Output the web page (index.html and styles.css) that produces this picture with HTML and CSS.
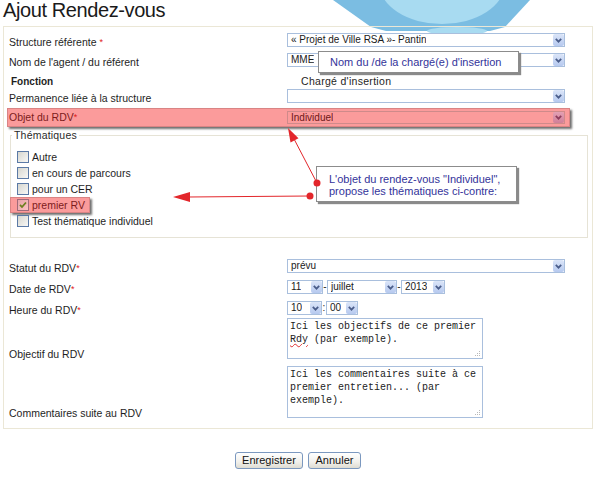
FILE: index.html
```html
<!DOCTYPE html>
<html lang="fr">
<head>
<meta charset="utf-8">
<title>Ajout Rendez-vous</title>
<link rel="stylesheet" href="styles.css">
</head>
<body>
<svg class="bg-logo" width="605" height="40" viewBox="0 0 605 40" aria-hidden="true">
  <polygon points="333,0 530,0 505,27 490,31 386,31 371,27" fill="#7bbde2"/>
  <ellipse cx="442" cy="-17" rx="63" ry="41" fill="#a8dbf1"/>
  <ellipse cx="457" cy="31" rx="30" ry="4" fill="#a8dbf1"/>
</svg>

<h1 class="title">Ajout Rendez-vous</h1>

<form class="box">
  <div class="row r20">
    <label class="lbl">Structure référente <span class="req">*</span></label>
    <div class="sel w-full"><span class="val">« Projet de Ville RSA »- Pantin</span><span class="arr"><svg width="7" height="5" viewBox="0 0 7 5"><path d="M0.8 0.8 L3.5 3.7 L6.2 0.8" fill="none" stroke="currentColor" stroke-width="1.7"/></svg></span></div>
  </div>
  <div class="row r20">
    <label class="lbl">Nom de l'agent / du référent</label>
    <div class="sel w-full"><span class="val">MME</span><span class="arr"><svg width="7" height="5" viewBox="0 0 7 5"><path d="M0.8 0.8 L3.5 3.7 L6.2 0.8" fill="none" stroke="currentColor" stroke-width="1.7"/></svg></span></div>
  </div>
  <div class="row r16">
    <span class="fn">Fonction</span>
    <span class="fn-val">Chargé d'insertion</span>
  </div>
  <div class="row r19">
    <label class="lbl">Permanence liée à la structure</label>
    <div class="sel w-full"><span class="val"></span><span class="arr"><svg width="7" height="5" viewBox="0 0 7 5"><path d="M0.8 0.8 L3.5 3.7 L6.2 0.8" fill="none" stroke="currentColor" stroke-width="1.7"/></svg></span></div>
  </div>
  <div class="row hl">
    <label class="lbl">Objet du RDV<span class="req">*</span></label>
    <div class="sel pink w-full"><span class="val">Individuel</span><span class="arr"><svg width="7" height="5" viewBox="0 0 7 5"><path d="M0.8 0.8 L3.5 3.7 L6.2 0.8" fill="none" stroke="currentColor" stroke-width="1.7"/></svg></span></div>
  </div>

  <fieldset class="themes">
    <legend>Thématiques</legend>
    <div class="cb-row"><span class="cb"></span>Autre</div>
    <div class="cb-row"><span class="cb"></span>en cours de parcours</div>
    <div class="cb-row"><span class="cb"></span>pour un CER</div>
    <div class="cb-row hl2"><span class="cb checked"><svg width="10" height="10" viewBox="0 0 10 10"><path d="M2 4.8 L4 7 L8 2.5" fill="none" stroke="#6d7f1d" stroke-width="1.8"/></svg></span>premier RV</div>
    <div class="cb-row"><span class="cb"></span>Test thématique individuel</div>
  </fieldset>

  <div class="row r21">
    <label class="lbl">Statut du RDV<span class="req">*</span></label>
    <div class="sel w-full"><span class="val">prévu</span><span class="arr"><svg width="7" height="5" viewBox="0 0 7 5"><path d="M0.8 0.8 L3.5 3.7 L6.2 0.8" fill="none" stroke="currentColor" stroke-width="1.7"/></svg></span></div>
  </div>
  <div class="row r21">
    <label class="lbl">Date de RDV<span class="req">*</span></label>
    <div class="inline">
      <div class="sel w36"><span class="val">11</span><span class="arr"><svg width="7" height="5" viewBox="0 0 7 5"><path d="M0.8 0.8 L3.5 3.7 L6.2 0.8" fill="none" stroke="currentColor" stroke-width="1.7"/></svg></span></div>
      <span class="sep">-</span>
      <div class="sel w70"><span class="val">juillet</span><span class="arr"><svg width="7" height="5" viewBox="0 0 7 5"><path d="M0.8 0.8 L3.5 3.7 L6.2 0.8" fill="none" stroke="currentColor" stroke-width="1.7"/></svg></span></div>
      <span class="sep">-</span>
      <div class="sel w44"><span class="val">2013</span><span class="arr"><svg width="7" height="5" viewBox="0 0 7 5"><path d="M0.8 0.8 L3.5 3.7 L6.2 0.8" fill="none" stroke="currentColor" stroke-width="1.7"/></svg></span></div>
    </div>
  </div>
  <div class="row r17">
    <label class="lbl">Heure du RDV<span class="req">*</span></label>
    <div class="inline">
      <div class="sel w35"><span class="val">10</span><span class="arr"><svg width="7" height="5" viewBox="0 0 7 5"><path d="M0.8 0.8 L3.5 3.7 L6.2 0.8" fill="none" stroke="currentColor" stroke-width="1.7"/></svg></span></div>
      <span class="sep">:</span>
      <div class="sel w32"><span class="val">00</span><span class="arr"><svg width="7" height="5" viewBox="0 0 7 5"><path d="M0.8 0.8 L3.5 3.7 L6.2 0.8" fill="none" stroke="currentColor" stroke-width="1.7"/></svg></span></div>
    </div>
  </div>
  <div class="row tarow">
    <label class="lbl lbl-end">Objectif du RDV</label>
    <div class="ta ta1">Ici les objectifs de ce premier<br><span class="spell">Rdy</span> (par exemple).<svg class="grip" width="7" height="7" viewBox="0 0 7 7"><g fill="#b9b9b9"><rect x="5" y="1" width="1" height="1"/><rect x="3" y="3" width="1" height="1"/><rect x="5" y="3" width="1" height="1"/><rect x="1" y="5" width="1" height="1"/><rect x="3" y="5" width="1" height="1"/><rect x="5" y="5" width="1" height="1"/></g></svg></div>
  </div>
  <div class="row tarow last">
    <label class="lbl lbl-end">Commentaires suite au RDV</label>
    <div class="ta ta2">Ici les commentaires suite à ce<br>premier entretien... (par<br>exemple).<svg class="grip" width="7" height="7" viewBox="0 0 7 7"><g fill="#b9b9b9"><rect x="5" y="1" width="1" height="1"/><rect x="3" y="3" width="1" height="1"/><rect x="5" y="3" width="1" height="1"/><rect x="1" y="5" width="1" height="1"/><rect x="3" y="5" width="1" height="1"/><rect x="5" y="5" width="1" height="1"/></g></svg></div>
  </div>
</form>

<div class="actions">
  <button type="button" class="btn btn-save">Enregistrer</button>
  <button type="button" class="btn btn-cancel">Annuler</button>
</div>

<div class="callout c1">Nom du /de la chargé(e) d'insertion</div>
<div class="callout c2">L'objet du rendez-vous "Individuel",<br>propose les thématiques ci-contre:</div>

<svg class="overlay" width="605" height="480" viewBox="0 0 605 480" aria-hidden="true">
  <g fill="#e3262b" stroke="#e3262b">
    <line x1="317" y1="183" x2="293" y2="137" stroke-width="1"/>
    <polygon points="288,128 298.5,138.3 290.5,142.5" stroke="none"/>
    <line x1="310" y1="196" x2="188" y2="197" stroke-width="1"/>
    <polygon points="173,197 190,192 190,202" stroke="none"/>
    <circle cx="317" cy="183" r="3.5" stroke="none"/>
    <circle cx="310" cy="196" r="3.5" stroke="none"/>
  </g>
</svg>
</body>
</html>
```

FILE: styles.css
```css
* { box-sizing: border-box; }

html { background: #fff; }

body {
  margin: 0;
  width: 605px;
  height: 480px;
  overflow: hidden;
  position: relative;
  font-family: "Liberation Sans", Arial, sans-serif;
  color: #1e1e1e;
}

.bg-logo {
  position: absolute;
  left: 0;
  top: 0;
  z-index: -1;
}

.title {
  margin: 0 0 6px 0;
  padding-left: 3px;
  font-size: 20px;
  line-height: 20px;
  height: 20px;
  font-weight: normal;
  letter-spacing: -0.4px;
  color: #1a1a1a;
}

.box {
  margin: 0 0 0 3px;
  width: 590px;
  border: 1px solid #ebe7d6;
  padding: 6px 0 10px 5px;
}

.row {
  display: grid;
  grid-template-columns: 278px 278px;
  align-items: start;
}

.r16 { height: 16px; }
.r17 { height: 17px; }
.r19 { height: 19px; }
.r20 { height: 20px; }
.r21 { height: 21px; }

.lbl {
  font-size: 10.5px;
  line-height: 13px;
  padding-top: 3px;
  color: #1e1e1e;
}

.req {
  color: #e01818;
  font-size: 9px;
  vertical-align: 1px;
}

.fn {
  font-weight: bold;
  font-size: 10px;
  line-height: 13px;
  padding: 2px 0 0 2px;
}

.fn-val {
  font-size: 10.5px;
  line-height: 13px;
  padding: 2px 0 0 14px;
  letter-spacing: 0.3px;
}

.sel {
  display: flex;
  align-items: stretch;
  justify-content: space-between;
  height: 14px;
  border: 1px solid #a9bfdd;
  background: #fff;
  font-size: 10px;
  line-height: 12px;
  color: #1a1a1a;
  padding-left: 3px;
}

.sel .val {
  white-space: nowrap;
  overflow: hidden;
}

.sel .arr {
  flex: none;
  width: 11px;
  border-radius: 2px;
  background: linear-gradient(#dbe5f8, #b6c9ef);
  color: #4a5d8a;
  display: flex;
  align-items: center;
  justify-content: center;
}

.w-full { width: 278px; }
.w32 { width: 32px; }
.w35 { width: 35px; }
.w36 { width: 36px; }
.w44 { width: 44px; }
.w70 { width: 70px; }

.inline {
  display: flex;
  align-items: flex-start;
}

.sep {
  font-size: 10px;
  line-height: 14px;
  width: 4px;
  text-align: center;
}

.hl {
  margin-left: -2px;
  width: 563px;
  height: 19px;
  background: #fb9b9b;
  border: 1px solid #d98484;
  padding-left: 1px;
  box-shadow: 2px 2px 2px #707070;
  align-items: center;
  margin-bottom: 2px;
}

.hl .lbl {
  color: #7d1b1b;
  padding-top: 0;
}

.sel.pink {
  background: transparent;
  border-color: #cf8a8a;
  color: #6e1717;
  height: 13px;
}

.sel.pink .arr {
  background: linear-gradient(#e3a0b4, #d07f98);
  color: #8e3c5c;
}

.themes {
  margin: 0 4px 21px 1px;
  border: 1px solid #e6e3d6;
  padding: 7px 0 8px 6px;
  min-width: 0;
}

.themes legend {
  font-size: 10.5px;
  line-height: 13px;
  padding: 0 2px;
  margin-left: -5px;
  color: #2a2a2a;
  letter-spacing: 0.2px;
}

.cb-row {
  display: flex;
  align-items: center;
  height: 16px;
  font-size: 10.5px;
  color: #1e1e1e;
}

.cb {
  flex: none;
  width: 12px;
  height: 12px;
  border: 1px solid #5b7aa6;
  background: linear-gradient(135deg, #d6d6cf 0%, #f8f8f6 100%);
  margin-right: 3px;
  display: flex;
  align-items: center;
  justify-content: center;
}

.cb-row.hl2 {
  margin-left: -7px;
  padding-left: 6px;
  width: 80px;
  border: 1px solid #d98484;
  background: #fb9b9b;
  box-shadow: 2px 2px 2px #707070;
  color: #7d1b1b;
}

.cb.checked {
  border-color: #a06a7a;
  background: linear-gradient(135deg, #e8a3a8 0%, #fbc2c2 100%);
}

.tarow {
  align-items: end;
  margin-bottom: 7px;
}

.tarow.last { margin-bottom: 0; }

.lbl-end {
  padding-top: 0;
  margin-bottom: -2px;
}

.ta {
  position: relative;
  width: 196px;
  border: 1px solid #a9bfdd;
  background: #fff;
  font-family: "Liberation Mono", "Courier New", monospace;
  font-size: 10px;
  line-height: 13px;
  padding: 1px 2px;
  color: #222;
  white-space: nowrap;
}

.ta1 { height: 41px; }
.ta2 { height: 52px; }

.spell {
  text-decoration: underline wavy #e03030;
  text-decoration-thickness: 1px;
  text-underline-offset: 1px;
}

.grip {
  position: absolute;
  right: 1px;
  bottom: 1px;
}

.actions {
  display: flex;
  justify-content: center;
  gap: 5px;
  width: 590px;
  margin: 23px 0 0 3px;
}

.btn {
  height: 17px;
  border: 1px solid #7b98bf;
  border-radius: 3px;
  background: linear-gradient(#ffffff, #f1f0eb 60%, #dedcd2);
  font-family: inherit;
  font-size: 11px;
  line-height: 15px;
  color: #111;
  padding: 0;
}

.btn-save { width: 68px; }
.btn-cancel { width: 53px; }

.callout {
  position: absolute;
  z-index: 2;
  background: #fff;
  border: 1px solid #8c8c8c;
  box-shadow: 2px 2px 1px #8a8a8a;
  color: #33339a;
  font-size: 11px;
  line-height: 12px;
  white-space: nowrap;
}

.c1 {
  left: 318px;
  top: 51px;
  width: 201px;
  height: 22px;
  padding: 4px 0 0 11px;
}

.c2 {
  left: 316px;
  top: 166px;
  width: 201px;
  height: 36px;
  padding: 6px 0 0 12px;
}

.overlay {
  position: absolute;
  left: 0;
  top: 0;
  z-index: 3;
  pointer-events: none;
}
```
